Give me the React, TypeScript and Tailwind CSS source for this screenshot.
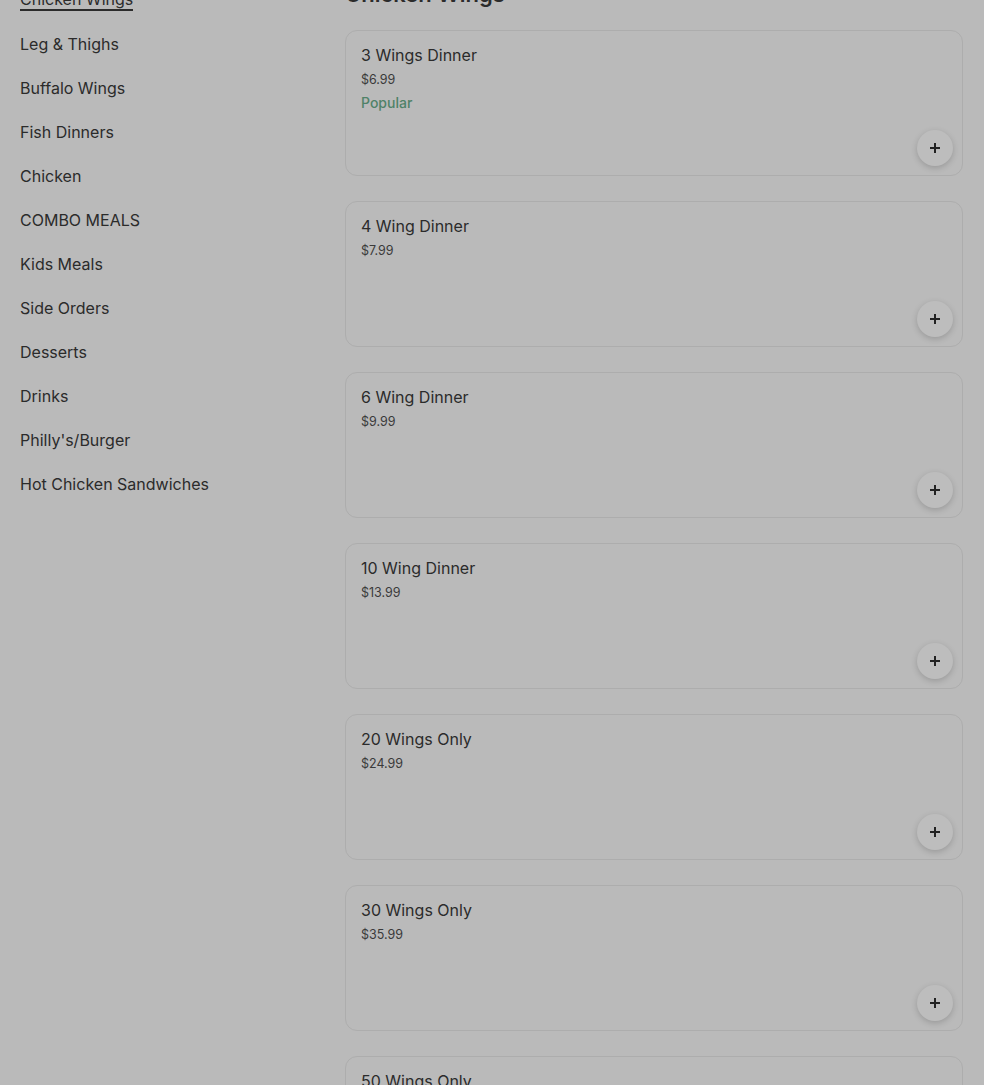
const categories = [
  'Chicken Wings',
  'Leg & Thighs',
  'Buffalo Wings',
  'Fish Dinners',
  'Chicken',
  'COMBO MEALS',
  'Kids Meals',
  'Side Orders',
  'Desserts',
  'Drinks',
  "Philly's/Burger",
  'Hot Chicken Sandwiches',
];

const items = [
  { name: '3 Wings Dinner', price: '$6.99', popular: true },
  { name: '4 Wing Dinner', price: '$7.99' },
  { name: '6 Wing Dinner', price: '$9.99' },
  { name: '10 Wing Dinner', price: '$13.99' },
  { name: '20 Wings Only', price: '$24.99' },
  { name: '30 Wings Only', price: '$35.99' },
  { name: '50 Wings Only', price: '$62.99' },
];

function PlusIcon() {
  return (
    <svg className="w-4 h-4" viewBox="0 0 16 16" fill="none" stroke="currentColor" strokeWidth={2}>
      <path d="M8 3v10M3 8h10" />
    </svg>
  );
}

export default function App() {
  return (
    <div
      className="h-[1085px] overflow-hidden bg-[#bababa] text-[#2b2b2b] flex items-start"
      style={{ fontFamily: 'Inter, Roboto, "Liberation Sans", sans-serif' }}
    >
      {/* sidebar */}
      <nav className="w-[345px] shrink-0 pl-5 -mt-[22px] flex flex-col">
        {categories.map((c, i) => (
          <div key={c} className="h-11 flex items-center">
            {i === 0 ? (
              <span className="text-base leading-5 border-b-2 border-[#2b2b2b]">{c}</span>
            ) : (
              <span className="text-base leading-6">{c}</span>
            )}
          </div>
        ))}
      </nav>

      {/* menu items */}
      <main className="flex-1 pr-[21px] -mt-[20px]">
        <h1 className="text-[22px] leading-7 font-semibold mb-[22px]">Chicken Wings</h1>
        <div className="flex flex-col gap-[25px]">
          {items.map((item) => (
            <div
              key={item.name}
              className="h-[146px] rounded-xl border border-[#adadad] px-[15px] pt-[14px] pb-[9px] pr-[9px] flex flex-col"
            >
              <div className="text-base leading-5">{item.name}</div>
              <div className="text-[12.5px] leading-4 mt-[7px] text-[#3a3a3a]">{item.price}</div>
              {item.popular && (
                <div className="text-sm leading-4 mt-[7px] font-medium text-[#4f8268]">Popular</div>
              )}
              <div className="mt-auto self-end">
                <button className="w-9 h-9 rounded-full bg-[#bdbdbd] shadow-[0_2px_6px_rgba(0,0,0,0.18)] flex items-center justify-center text-[#222]">
                  <PlusIcon />
                </button>
              </div>
            </div>
          ))}
        </div>
      </main>
    </div>
  );
}
